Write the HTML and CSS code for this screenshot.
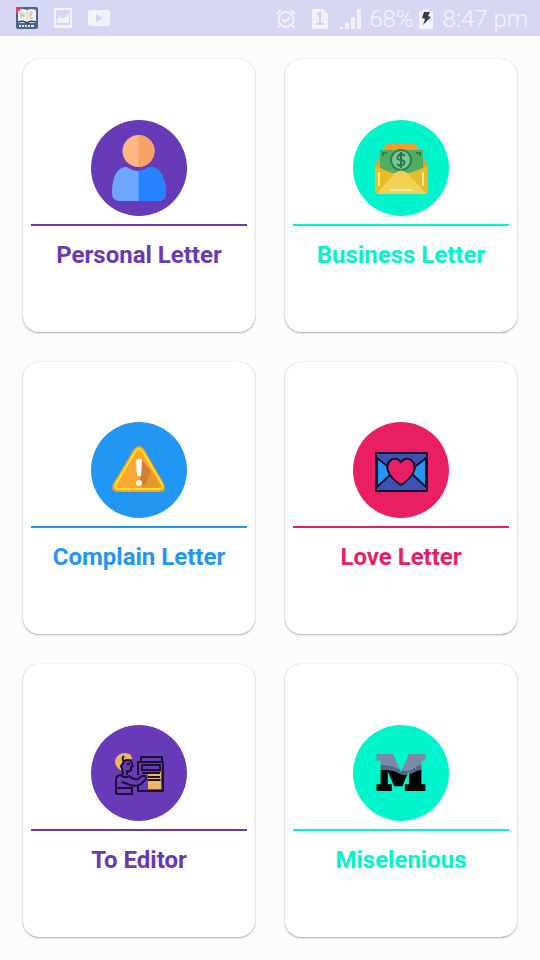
FILE: index.html
```html
<!DOCTYPE html>
<html lang="en">
<head>
<meta charset="utf-8">
<meta name="viewport" content="width=device-width, initial-scale=1">
<title>Letters</title>
<link rel="stylesheet" href="styles.css">
</head>
<body>
<header class="status">
  <div class="status-side notices">
    <svg width="22" height="22" viewBox="0 0 22 22" aria-hidden="true">
      <rect width="22" height="22" rx="2" fill="#49638f"/>
      <path d="M2 3Q7 1 11 3Q15 1 20 3V16H2Z" fill="#f5f3f5"/>
      <path d="M0 0H7L0 7Z" fill="#e8405f"/>
      <path d="M2 15Q8 13 11 16Q14 13 20 15" fill="none" stroke="#263e6c" stroke-width="1.5"/>
      <path d="M11 3V15" stroke="#c3c5d4"/>
      <path d="M5 11V6L8 10V6M14 6H17M14 8H16M14 11H17M14 6V11" fill="none" stroke="#cda58e"/>
      <path d="M3 19H5M6 19H8M9 19H11M12 19H14M15 19H18" stroke="#dfe4f3" stroke-width="2"/>
    </svg>
    <svg width="18" height="20" viewBox="0 0 18 20" aria-hidden="true">
      <path d="M0 0H18V20H0ZM2 2V17H16V2Z" fill="#f1f2fc" fill-rule="evenodd"/>
      <path d="M3 15V11L6 8L9 11L15 5V15Z" fill="#f1f2fc"/>
    </svg>
    <svg width="22" height="16" viewBox="0 0 22 16" aria-hidden="true">
      <rect width="22" height="16" rx="3" fill="#f1f2fc"/>
      <path d="M8 4L15 8L8 12Z" fill="#d6d8f1"/>
    </svg>
  </div>
  <div class="status-side system">
    <svg class="alarm" width="20" height="20" viewBox="0 0 20 20" fill="none" stroke="#f1f2fc" stroke-width="2" aria-hidden="true">
      <circle cx="10" cy="10.500" r="7.500"/>
      <path d="M1 5L5 1M19 5L15 1M4 16L2 19M16 16L18 19M6 10L9 13L14 8"/>
    </svg>
    <svg class="sim" width="16" height="20" viewBox="0 0 16 20" aria-hidden="true">
      <path d="M1 0H11L16 5V19Q16 20 15 20H1Q0 20 0 19V1Q0 0 1 0Z" fill="#f1f2fc"/>
      <path d="M5 6L8 4V15M4 15H12" fill="none" stroke="#d0d3eb" stroke-width="2"/>
    </svg>
    <svg class="signal" width="21" height="20" viewBox="0 0 21 20" fill="#f1f2fc" aria-hidden="true">
      <path d="M0 18H3V20H0ZM5 14H9V20H5ZM11 8H15V20H11ZM17 0H21V20H17Z"/>
    </svg>
    <span>68%</span>
    <svg class="battery" width="14" height="20" viewBox="0 0 14 20" aria-hidden="true">
      <path d="M4 0H10V2H13Q14 2 14 3V19Q14 20 13 20H1Q0 20 0 19V3Q0 2 1 2H4Z" fill="#f1f2fc"/>
      <path d="M5 3H11L9 7L12 8L4 16L6 10L3 9Z" fill="#3d3f48"/>
    </svg>
    <time>8:47 pm</time>
  </div>
</header>
<main class="grid">
  <a class="card purple" href="#personal">
    <svg class="badge" viewBox="0 0 96 96" aria-hidden="true">
      <path d="M36 47Q47 55 58 47Q66 46 71 55Q75 63 75 73Q75 81 67 81H29Q21 81 21 73Q21 63 24 55Q29 46 36 47Z" fill="#6da5ff"/>
      <path d="M47.500 51Q53 51 58 47Q66 46 71 55Q75 63 75 73Q75 81 67 81H47.500Z" fill="#2682ff"/>
      <circle cx="47.500" cy="31" r="16" fill="#ffb787"/>
      <path d="M47.500 15A16 16 0 0 1 47.500 47Z" fill="#f8a266"/>
    </svg>
    <span class="rule"></span>
    <span class="name">Personal Letter</span>
  </a>
  <a class="card mint" href="#business">
    <svg class="badge" viewBox="0 0 96 96" aria-hidden="true">
      <path d="M35 24H61Q63 24 64 26L67 31L75 46V56H22V46L29 31L32 26Q33 24 35 24Z" fill="#f19b2c"/>
      <path d="M27 30H70V55H27Z" fill="#4caf63"/>
      <path d="M30 36V33H34M63 33H67V36" fill="none" stroke="#31844d" stroke-width="2"/>
      <circle cx="48" cy="40" r="10" fill="#78cb96" stroke="#357d59" stroke-width="2"/>
      <path d="M52 36Q48 32 45 36Q43 40 48 40Q53 41 51 44Q48 48 44 44M48 32V48" fill="none" stroke="#2c7451" stroke-width="2"/>
      <path d="M22 46L39 53H57L75 46V71Q75 74 72 74H25Q22 74 22 71Z" fill="#e9bb27"/>
      <path d="M24 73L42 53Q48 48 54 53L73 73Q72 74 71 74H26Z" fill="#f1d154"/>
      <path d="M26 53V65M70 53V65M38 70H59" stroke="#fae797" stroke-width="2" stroke-linecap="round"/>
    </svg>
    <span class="rule"></span>
    <span class="name">Business Letter</span>
  </a>
  <a class="card blue" href="#complain">
    <svg class="badge" viewBox="0 0 96 96" aria-hidden="true">
      <path d="M43 27Q48 21 53 27L73 62Q76 69 69 70H27Q19 69 22 62Z" fill="#f4a51c"/>
      <path d="M44 30Q48 24 52 30L71 62Q73 67 68 67H28Q23 67 25 62Z" fill="#fba832" stroke="#ffdc27" stroke-width="2"/>
      <path d="M51 38L65 55L69 64L68 66H52L46 62L50 55Z" fill="#e9962b"/>
      <path d="M51 38L60 49L54 63L46 62L50 55Z" fill="#cf7d38"/>
      <path d="M45 38Q48 36 51 38L50 54H46Z" fill="#fff"/>
      <circle cx="48" cy="61" r="3" fill="#fff4e0"/>
    </svg>
    <span class="rule"></span>
    <span class="name">Complain Letter</span>
  </a>
  <a class="card pink" href="#love">
    <svg class="badge" viewBox="0 0 96 96" aria-hidden="true">
      <g stroke="#111130" stroke-width="2" stroke-linejoin="round">
        <rect x="23" y="31" width="51" height="38" rx="1" fill="#3f51b5"/>
        <path d="M24 36L38 47L37 53L24 65ZM73 36L59 47L60 53L73 65Z" fill="#2196f3"/>
        <rect x="23" y="31" width="51" height="38" rx="1" fill="none"/>
        <path d="M48 63Q38 57 35 49C32 40 41 32 48 40C55 32 64 40 61 49Q58 57 48 63Z" fill="#e91e63"/>
      </g>
    </svg>
    <span class="rule"></span>
    <span class="name">Love Letter</span>
  </a>
  <a class="card purple" href="#editor">
    <svg class="badge" viewBox="0 0 96 96" aria-hidden="true">
      <path d="M31 46Q24 43 24 36Q26 28 34 28Q41 28 41 34L32 36L31 40Z" fill="#efb562"/>
      <path d="M57 56H70V64H57ZM57 47H70V54H57Z" fill="#f0b663"/>
      <g fill="none" stroke="#1b102f" stroke-width="2" stroke-linejoin="round">
        <path d="M33 31Q30 34 33 36Q37 34 40 36L42 41L40 42V45Q39 47 36 46V50M33 36L31 40Q29 41 31 43L32 50M36 39H39"/>
        <path d="M25 69V55Q25 50 30 50Q34 54 38 51Q42 55 47 54L51 51Q55 50 55 54L50 59Q45 62 39 60L31 57M25 63H41V69H25"/>
        <path d="M47 50V37H72V66H47V61M50 37V32H71V37M51 40H69V45H51ZM51 48H69M57 52H69M57 55H69"/>
      </g>
    </svg>
    <span class="rule"></span>
    <span class="name">To Editor</span>
  </a>
  <a class="card mint" href="#miscellaneous">
    <svg class="badge" viewBox="0 0 96 96" aria-hidden="true">
      <defs>
        <mask id="letter" maskUnits="userSpaceOnUse" x="0" y="0" width="96" height="96">
          <text class="mark" x="48" y="64" text-anchor="middle">M</text>
        </mask>
      </defs>
      <g mask="url(#letter)">
        <path d="M18 26H78V70H18Z"/>
        <path d="M18 26H78V45Q66 44 62 47Q54 52 47 49Q38 43 18 46Z" fill="#536980"/>
        <path d="M18 26H78V38Q68 38 63 42Q55 48 48 45Q38 39 18 40Z" fill="#7c8ba5"/>
      </g>
    </svg>
    <span class="rule"></span>
    <span class="name">Miselenious</span>
  </a>
</main>
</body>
</html>
```
FILE: styles.css
```css
* {
  box-sizing: border-box;
}

body {
  margin: 0;
  min-height: 100vh;
  display: flex;
  flex-direction: column;
  background: #fcfcfc;
  font-family: Roboto, "Liberation Sans", sans-serif;
}

svg {
  display: block;
  flex: none;
}

.status {
  height: 36px;
  padding: 0 12px 0 16px;
  display: flex;
  justify-content: space-between;
  background: #d6d8f3;
  color: #f4f5fd;
  font-size: 24px;
  font-weight: 300;
  line-height: 36px;
}

.status-side {
  display: flex;
  align-items: center;
}

.system {
  padding-top: 2px;
}

.notices {
  gap: 16px;
}

.alarm {
  margin-right: 16px;
}

.sim {
  margin-right: 12px;
}

.signal {
  margin-right: 8px;
}

.battery {
  margin: 0 10px 0 5px;
}

.grid {
  flex: 1;
  display: grid;
  grid-template-columns: 1fr 1fr;
  grid-auto-rows: 1fr;
  gap: 30px;
  padding: 23px;
}

.card {
  padding: 8px 8px 10px;
  display: flex;
  flex-direction: column;
  align-items: center;
  justify-content: center;
  border-radius: 16px;
  background: #fff;
  box-shadow: 0 1px 2px rgba(0, 0, 0, 0.3), 0 0 1px rgba(0, 0, 0, 0.2);
  color: var(--tone);
  text-decoration: none;
}

.purple { --tone: #673ab7; }
.mint { --tone: #00f5cc; }
.blue { --tone: #2196f3; }
.pink { --tone: #e91e63; }

.badge {
  width: 96px;
  height: 96px;
  border-radius: 50%;
  background: var(--tone);
}

.rule {
  align-self: stretch;
  height: 2px;
  margin: 8px 0 15px;
  background: var(--tone);
}

.name {
  font-size: 24px;
  font-weight: 700;
  line-height: 28px;
  text-align: center;
}

.mark {
  fill: #fff;
  stroke: #fff;
  stroke-width: 4px;
  font-family: "DejaVu Serif", serif;
  font-size: 44px;
  font-weight: 700;
}
```
